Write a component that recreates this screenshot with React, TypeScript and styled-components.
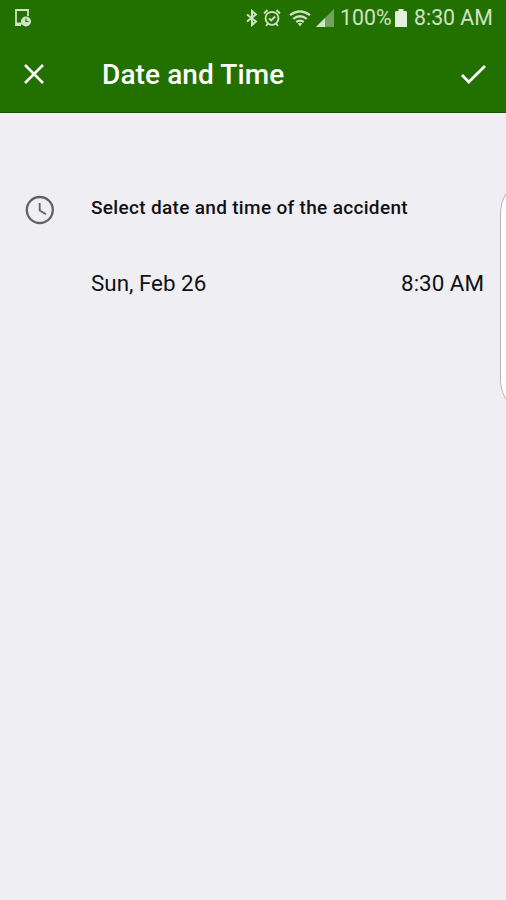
import React from "react";
import styled, { createGlobalStyle } from "styled-components";

const GlobalStyle = createGlobalStyle`
  * { box-sizing: border-box; }
  body { margin: 0; background: #efeef3; }
`;

const Screen = styled.div`
  position: relative;
  display: flex;
  flex-direction: column;
  height: 900px;
  overflow: hidden;
  background: #efeef3;
  color: #111114;
  font-family: Roboto, sans-serif;
`;

const Header = styled.header`
  height: 113px;
  background: #227000;
  border-bottom: 1px solid #16500a;
`;

const StatusBar = styled.div`
  display: flex;
  align-items: center;
  height: 36px;
  padding: 0 14px;
  color: #cfe3c5;
`;

const StatusIcons = styled.div`
  display: flex;
  align-items: center;
  margin-left: auto;
`;

const Icon = styled.svg<{ $before?: number }>`
  display: block;
  flex: none;
  margin-left: ${(p) => p.$before ?? 0}px;
`;

const StatusText = styled.span<{ $width: number; $before: number }>`
  width: ${(p) => p.$width}px;
  margin-left: ${(p) => p.$before}px;
  font-size: 21.3px;
  line-height: 36px;
  white-space: nowrap;
`;

const ActionBar = styled.div`
  display: flex;
  align-items: center;
  height: 76px;
  padding: 0 19px 0 23px;
`;

const IconButton = styled.button`
  display: flex;
  padding: 0;
  border: 0;
  background: none;
  color: #fff;
`;

const Title = styled.h1`
  flex: 1;
  margin: 0 0 0 57px;
  padding-top: 2px;
  color: #fff;
  font-size: 28px;
  font-weight: 500;
  letter-spacing: 0.1px;
  line-height: 32px;
`;

const Form = styled.main`
  display: grid;
  grid-template-columns: 66px 1fr;
  grid-template-rows: 30px 30px;
  row-gap: 46px;
  padding: 81px 22px 0 25px;
`;

const Prompt = styled.h2`
  margin: 0;
  font-size: 19px;
  font-weight: 500;
  letter-spacing: 0.32px;
  line-height: 28px;
  white-space: nowrap;
`;

const ValueRow = styled.div`
  grid-column: 2;
  display: flex;
  justify-content: space-between;
  font-size: 22.4px;
  line-height: 26px;
`;

const Value = styled.span`
  white-space: nowrap;
`;

const EdgeHandle = styled.div`
  position: absolute;
  top: 188px;
  left: 500px;
  width: 30px;
  height: 217px;
  border: 1px solid #b4b4b7;
  border-radius: 16px / 28px;
  background: #fff;
`;

export default function App() {
  return (
    <Screen>
      <GlobalStyle />
      <Header>
        <StatusBar>
          <Icon width="18" height="20" viewBox="0 0 18 20" fill="none">
            <path d="M14 8V2H2v15h5M2 15.5h6" stroke="currentColor" strokeWidth="1.8" />
            <circle cx="12" cy="13.5" r="5" fill="currentColor" />
            <path d="M12 10.5v3h2.5" stroke="#227000" strokeWidth="1.2" />
          </Icon>
          <StatusIcons>
            <Icon width="12" height="18" viewBox="0 0 12 18" fill="none" stroke="currentColor" strokeWidth="2">
              <path d="M1 5.5l9 7-4 3.5V2l4 3.5-9 7" />
            </Icon>
            <Icon $before={5} width="18" height="18" viewBox="0 0 18 18" fill="none" stroke="currentColor" strokeWidth="1.8">
              <circle cx="9" cy="9.3" r="6.5" />
              <path d="M1 4.5L4.5 1M17 4.5L13.5 1M3 17l2-2.5M15 17l-2-2.5M6 9.3l2.2 2.2 4-4" />
            </Icon>
            <Icon $before={8} width="22" height="17" viewBox="0 0 22 17" fill="none" stroke="currentColor" strokeWidth="2.3">
              <path d="M1 5.2q10-7.6 20 0M4.2 8.8q6.8-5.2 13.6 0M7.2 12q3.8-2.8 7.6 0" />
              <path d="M8.8 13.5q2.2-1.4 4.4 0L11 16.5z" fill="currentColor" stroke="none" />
            </Icon>
            <Icon $before={5} width="18" height="18" viewBox="0 0 18 18">
              <path d="M0 18L18 0v18z" fill="#73a45e" />
              <path d="M0 18L9 9v9z" fill="#cfe3c5" />
            </Icon>
            <StatusText $before={6} $width={51}>100%</StatusText>
            <Icon $before={4} width="12" height="18" viewBox="0 0 12 18">
              <path d="M3.5 0h5v2h2q1.5 0 1.5 1.5V18H0V3.5Q0 2 1.5 2h2z" fill="#e5f1df" />
            </Icon>
            <StatusText $before={7} $width={78}>8:30 AM</StatusText>
          </StatusIcons>
        </StatusBar>
        <ActionBar>
          <IconButton aria-label="Close">
            <Icon width="22" height="22" viewBox="0 0 22 22" fill="none" stroke="currentColor" strokeWidth="2.5">
              <path d="M2 2l18 18M20 2L2 20" />
            </Icon>
          </IconButton>
          <Title>Date and Time</Title>
          <IconButton aria-label="Confirm">
            <Icon width="27" height="21" viewBox="0 0 27 21" fill="none" stroke="currentColor" strokeWidth="2.8">
              <path d="M2 11l6.8 7L25 2" />
            </Icon>
          </IconButton>
        </ActionBar>
      </Header>
      <Form>
        <Icon width="30" height="31" viewBox="0 0 30 31" fill="none" stroke="#626166">
          <circle cx="14.8" cy="16" r="13" strokeWidth="2.3" />
          <path d="M14.7 9v7.4l6.2 3.8" strokeWidth="1.8" />
        </Icon>
        <Prompt>Select date and time of the accident</Prompt>
        <ValueRow>
          <Value>Sun, Feb 26</Value>
          <Value>8:30 AM</Value>
        </ValueRow>
      </Form>
      <EdgeHandle />
    </Screen>
  );
}
